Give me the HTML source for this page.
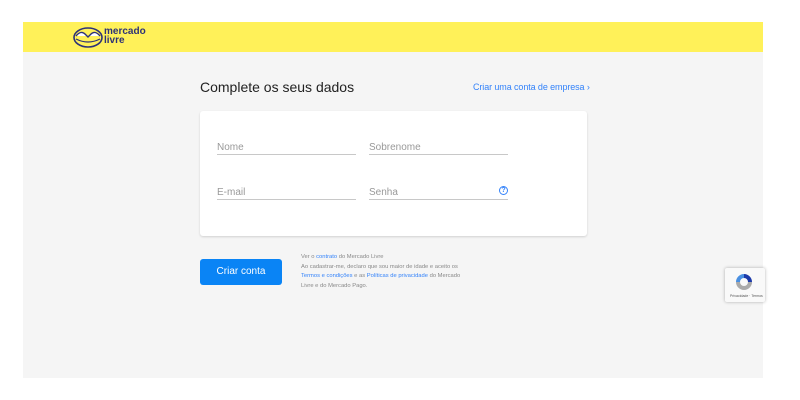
<!DOCTYPE html>
<html><head><style>
*{margin:0;padding:0;box-sizing:border-box}
body{width:800px;height:400px;background:#fff;font-family:"Liberation Sans",sans-serif;position:relative;overflow:hidden}
.main{position:absolute;left:23px;top:22px;width:740px;height:356px;background:#f5f5f5}
.hdr{position:absolute;left:23px;top:22px;width:740px;height:30px;background:#fff159}
.a{position:absolute}
.f{position:absolute;border-bottom:1px solid #c8c8c8;color:#999;font-size:10px;height:16px;padding-top:3px}
</style></head><body>
<div class="main"></div>
<div class="hdr"></div>
<svg class="a" style="left:73px;top:27px" width="30" height="21" viewBox="0 0 30 21">
<ellipse cx="15" cy="10.5" rx="14" ry="9.5" fill="#fff159" stroke="#2d3277" stroke-width="1.6"/>
<path d="M3 9 Q8 3 12 7 L15 10 L18 7 Q22 3 27 9" fill="#fff" stroke="#2d3277" stroke-width="1.4"/>
<path d="M3 12 Q15 18 27 12" fill="none" stroke="#2d3277" stroke-width="1.2"/>
</svg>
<div class="a" style="left:104px;top:27px;font-size:10px;font-weight:bold;line-height:9px;color:#2d3277">mercado<br>livre</div>
<div class="a" style="left:200px;top:79px;font-size:14px;color:#222">Complete os seus dados</div>
<div class="a" style="left:473px;top:82px;font-size:9px;color:#3483fa;letter-spacing:-0.1px">Criar uma conta de empresa ›</div>
<div class="a" style="left:200px;top:111px;width:387px;height:125px;background:#fff;border-radius:3px;box-shadow:0 1px 2px rgba(0,0,0,.15)"></div>
<div class="f" style="left:217px;top:139px;width:139px">Nome</div>
<div class="f" style="left:369px;top:139px;width:139px">Sobrenome</div>
<div class="f" style="left:217px;top:184px;width:139px">E-mail</div>
<div class="f" style="left:369px;top:184px;width:139px">Senha</div>
<div class="a" style="left:499px;top:186px;width:9px;height:9px;border:1px solid #3483fa;border-radius:50%;font-size:7px;line-height:7px;text-align:center;color:#3483fa;font-weight:bold">?</div>
<div class="a" style="left:200px;top:259px;width:82px;height:26px;background:#0a84f5;border-radius:3px;color:#fff;font-size:10px;line-height:26px;text-align:center">Criar conta</div>
<div class="a" style="left:301px;top:253px;font-size:5.8px;line-height:9.5px;color:#888;width:180px">Ver o <span style="color:#3483fa">contrato</span> do Mercado Livre<br>Ao cadastrar-me, declaro que sou maior de idade e aceito os<br><span style="color:#3483fa">Termos e condições</span> e as <span style="color:#3483fa">Políticas de privacidade</span> do Mercado<br>Livre e do Mercado Pago.</div>
<div class="a" style="left:725px;top:268px;width:40px;height:34px;background:#f9f9f9;box-shadow:0 0 3px rgba(0,0,0,.3);border-radius:2px"></div>
<svg class="a" style="left:734px;top:272px" width="20" height="20" viewBox="0 0 20 20">
<path d="M10 2 A8 8 0 0 1 18 10 L14 10 A4 4 0 0 0 10 6Z" fill="#1c3aa9"/>
<path d="M2 10 A8 8 0 0 1 10 2 L10 6 A4 4 0 0 0 6 10Z" fill="#4a90e2"/>
<path d="M2 10 A8 8 0 0 0 18 10 L14 10 A4 4 0 0 1 6 10Z" fill="#aaa"/>
</svg>
<div class="a" style="left:730px;top:294px;font-size:3.5px;color:#555">Privacidade · Termos</div>
</body></html>
